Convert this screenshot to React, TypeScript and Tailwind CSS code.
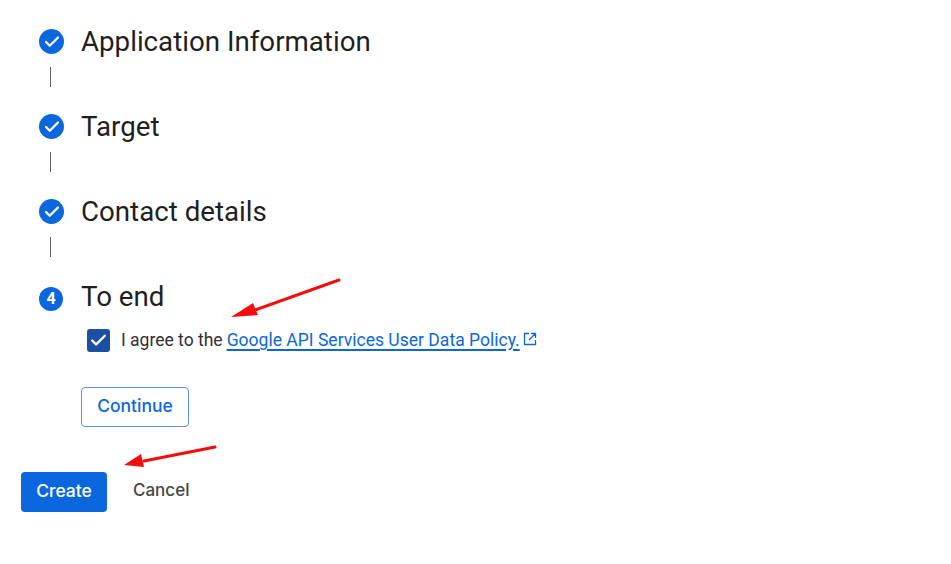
import { Check } from "lucide-react";

const sans = "font-['Roboto',sans-serif]";
const buttonFont = "font-['Inter',sans-serif]";

function Arrow({ className, width, height, line, head }: { className: string; width: number; height: number; line: string; head: string }) {
  return (
    <svg className={className} width={width} height={height} viewBox={`0 0 ${width} ${height}`} fill="none">
      <path d={line} stroke="#f30d0d" strokeWidth="3" strokeLinecap="round" />
      <path d={head} fill="#f30d0d" />
    </svg>
  );
}

function StepHead({ title, number }: { title: string; number?: string }) {
  return (
    <div className="flex h-[25px] items-center">
      {number ? (
        <div className="ml-[39px] mr-[1px] mt-[5px] flex h-[24px] w-[24px] items-center justify-center rounded-full bg-[#0b67de] text-white">
          <span className="text-[16px] font-bold">{number}</span>
        </div>
      ) : (
        <div className="ml-[39px] flex h-[25px] w-[25px] items-center justify-center rounded-full bg-[#0b67de] text-white">
          <Check size={18} strokeWidth={3} />
        </div>
      )}
      <span className="ml-[17px] text-[27.7px] leading-[25px] text-[#1f1f1f]">{title}</span>
    </div>
  );
}

function Connector() {
  return <div className="ml-[50px] mt-[13px] mb-[27px] h-[20px] w-px bg-[#5f6368]" />;
}

export default function App() {
  return (
    <div className={`relative h-[564px] w-[951px] overflow-hidden bg-white ${sans}`}>
      <div className="flex flex-col pt-[29px]">
        <StepHead title="Application Information" />
        <Connector />
        <StepHead title="Target" />
        <Connector />
        <StepHead title="Contact details" />
        <Connector />
        <StepHead title="To end" number="4" />

        <div className="ml-[87px] mt-[19px] flex h-[24px] items-center">
          <div className="flex h-[23px] w-[23px] items-center justify-center rounded-[3px] bg-[#1a4fa3] text-white">
            <Check size={19} strokeWidth={3} />
          </div>
          <span className="ml-[11px] text-[17.5px] text-[#303134]">I agree to the</span>
          <a className="ml-[4px] text-[17.55px] text-[#0b67de] underline decoration-[1.5px] underline-offset-[3px]">Google API Services User Data Policy.</a>
          <svg className="ml-[3px] mb-[3px]" width="14" height="14" viewBox="0 0 14 14" fill="none" stroke="#0b67de" strokeWidth="1.3">
            <path d="M6 1.5H1.5v11h11V8M8 1.5h4.5V6M12.5 1.5L6 8" />
          </svg>
        </div>

        <button className={`ml-[81px] mt-[35px] h-[40px] w-[108px] rounded-[4px] border border-[#5f8fd6] pb-[2px] text-[17.5px] font-medium text-[#0b67de] ${buttonFont}`}>
          Continue
        </button>

        <div className="ml-[21px] mt-[45px] flex items-center">
          <button className={`h-[40px] w-[86px] rounded-[4px] bg-[#0b67de] pb-[2px] text-[17.5px] font-medium text-white ${buttonFont}`}>Create</button>
          <button className={`ml-[26px] pb-[2px] text-[17px] font-medium text-[#444746] ${buttonFont}`}>Cancel</button>
        </div>
      </div>

      <Arrow className="absolute left-[230px] top-[277px]" width={112} height={42} line="M109 3L22 34" head="M1 40L23 26L28 38Z" />
      <Arrow className="absolute left-[122px] top-[444px]" width={96} height={24} line="M93 3L22 17" head="M2 21L19 10L22 23Z" />
    </div>
  );
}
